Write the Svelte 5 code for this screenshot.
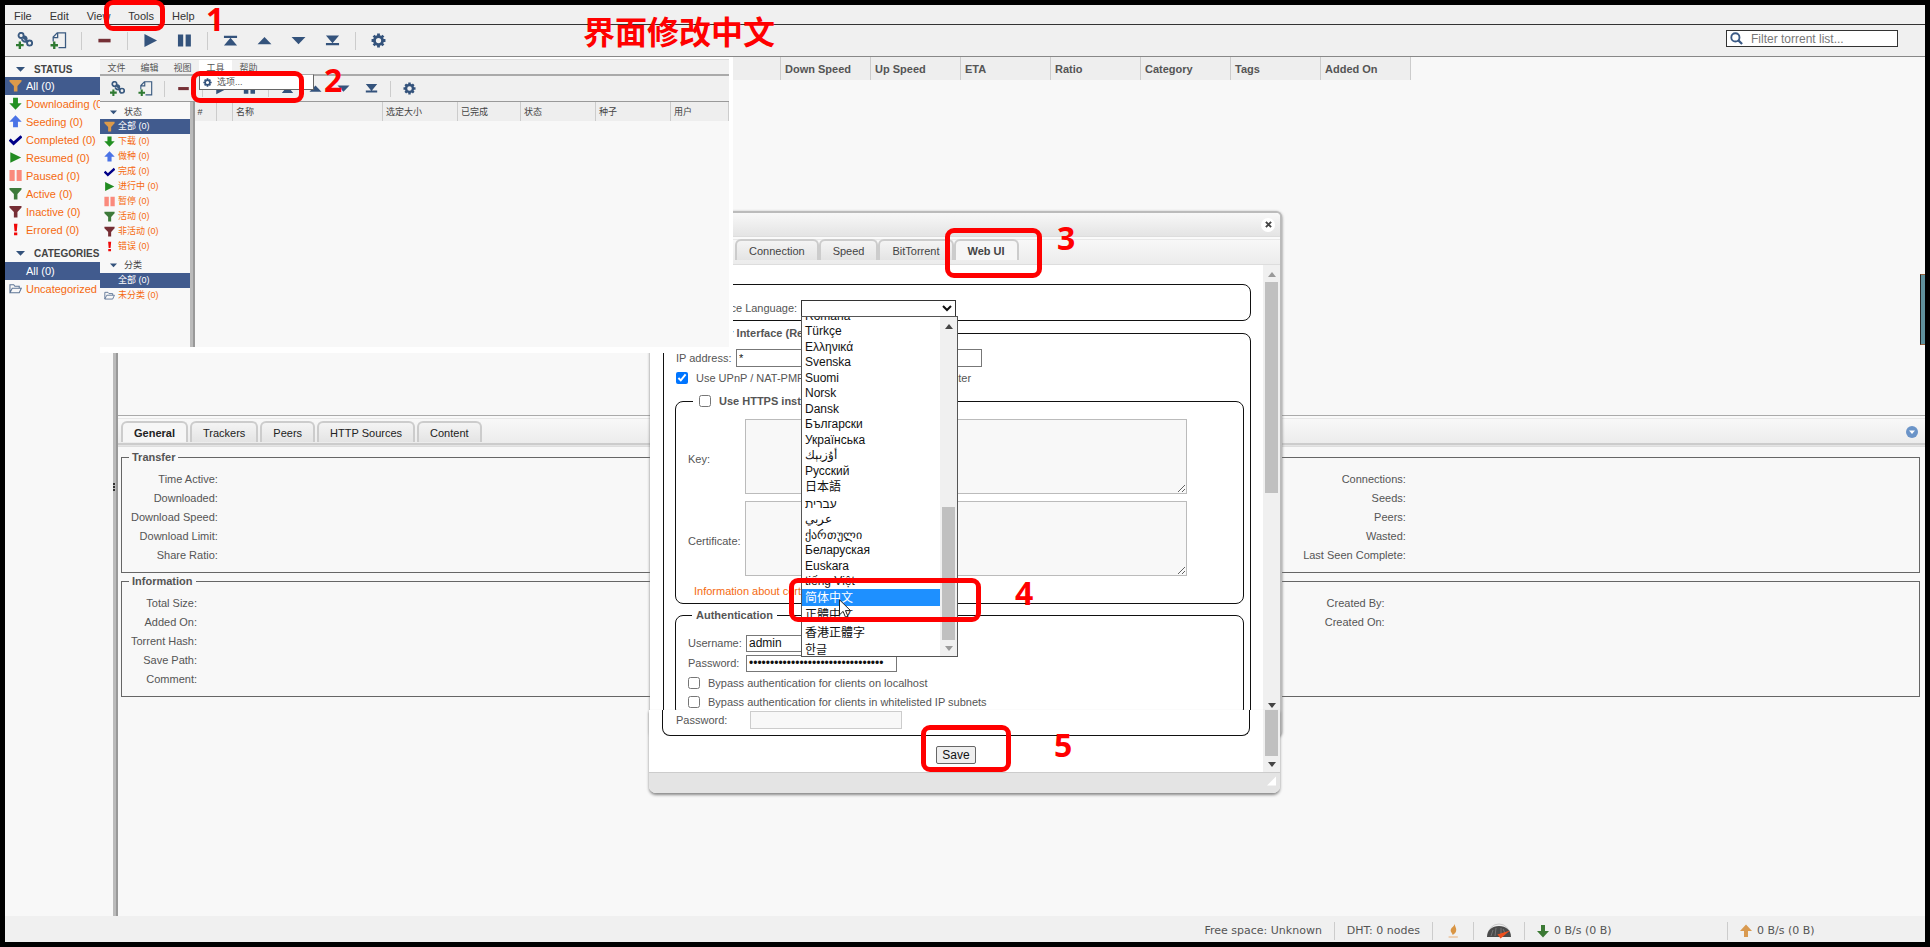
<script>
  const menus = ['File', 'Edit', 'View', 'Tools', 'Help'];
  const tools = [
    ['link', 'Add link'], ['file', 'Add file'], null,
    ['minus', 'Delete'], null,
    ['play', 'Resume'], ['pause', 'Pause'], null,
    ['top', 'Top'], ['up', 'Up'], ['down', 'Down'], ['bottom', 'Bottom'], null,
    ['gear', 'Options']
  ];
  const statusIcons = ['funnel-orange', 'arrow-down', 'arrow-up', 'check', 'resume', 'paused', 'funnel-green', 'funnel-red', 'error'];
  const sideEn = {
    status: 'STATUS',
    items: ['All (0)', 'Downloading (0)', 'Seeding (0)', 'Completed (0)', 'Resumed (0)', 'Paused (0)', 'Active (0)', 'Inactive (0)', 'Errored (0)'],
    categories: 'CATEGORIES',
    all: 'All (0)',
    none: 'Uncategorized (0)'
  };
  const sideZh = {
    status: '状态',
    items: ['全部 (0)', '下载 (0)', '做种 (0)', '完成 (0)', '进行中 (0)', '暂停 (0)', '活动 (0)', '非活动 (0)', '错误 (0)'],
    categories: '分类',
    all: '全部 (0)',
    none: '未分类 (0)'
  };
  const menusZh = ['文件', '编辑', '视图', '工具', '帮助'];
  const columns = ['Down Speed', 'Up Speed', 'ETA', 'Ratio', 'Category', 'Tags', 'Added On'];
  const columnsZh = [['#', 22], ['', 16], ['名称', 150], ['选定大小', 75], ['已完成', 63], ['状态', 75], ['种子', 75], ['用户', 58]];
  const tabs = ['General', 'Trackers', 'Peers', 'HTTP Sources', 'Content'];
  const prefTabs = ['Connection', 'Speed', 'BitTorrent', 'Web UI'];
  const transfer = [
    ['Time Active:', 'Connections:'],
    ['Downloaded:', 'Seeds:'],
    ['Download Speed:', 'Peers:'],
    ['Download Limit:', 'Wasted:'],
    ['Share Ratio:', 'Last Seen Complete:']
  ];
  const information = [
    ['Total Size:', 'Created By:'],
    ['Added On:', 'Created On:'],
    ['Torrent Hash:', ''],
    ['Save Path:', ''],
    ['Comment:', '']
  ];
  const languages = [
    'Română', 'Türkçe', 'Ελληνικά', 'Svenska', 'Suomi', 'Norsk', 'Dansk', 'Български', 'Українська',
    'أۇزبېك', 'Русский', '日本語', 'עברית', 'عربي', 'ქართული', 'Беларуская', 'Euskara', 'tiếng Việt',
    '简体中文', '正體中文', '香港正體字', '한글'
  ];
  const tall = ['日本語', '简体中文', '正體中文', '香港正體字', '한글'];
</script>

{#snippet icon(name)}
  <svg class="icon {name}" viewBox="0 0 16 16" aria-hidden="true">
    {#if name === 'link'}
      <g fill="none" stroke="#3a5a80" stroke-width="1.8">
        <circle cx="4.8" cy="3.2" r="2.4" />
        <circle cx="12.8" cy="10.4" r="2.4" />
        <path d="M7 4.4c2.4-.6 3.6 1.4 2.8 3.2M5.4 6.8c1 2.4 3 2.6 4.8 2.2M6.6 5l4.6 4" />
      </g>
      <path d="M3.6 9v7M0 12.4h7.2" stroke="#2f7a32" stroke-width="2.2" />
    {:else if name === 'file'}
      <path d="M3 9V4.8L6.8.8h7.8v14H8M3 5.2h4.2V1" fill="none" stroke="#3a5a80" stroke-width="1.2" />
      <path d="M4 9v7M.5 12.5h7" stroke="#2f7a32" stroke-width="2.2" />
    {:else if name === 'minus'}
      <path d="M1.5 6.2h13v3.8h-13z" fill="#752f35" />
    {:else if name === 'play'}
      <path d="M1.5 1 15 8 1.5 15z" fill="#34537c" />
    {:else if name === 'pause'}
      <path d="M1 1.5h5.6v13H1zM9.2 1.5h5.6v13H9.2z" fill="#34537c" />
    {:else if name === 'top'}
      <path d="M1 2.8h14v2.4H1zM8 5l7 8.4H1z" fill="#34537c" />
    {:else if name === 'up'}
      <path d="M8 4.2 15.4 12H.6z" fill="#34537c" />
    {:else if name === 'down'}
      <path d="M8 12 .6 4.2h14.8z" fill="#34537c" />
    {:else if name === 'bottom'}
      <path d="M1 2.6h14l-7 8.4zM1 10.6h14V13H1z" fill="#34537c" />
    {:else if name === 'gear'}
      <circle cx="8" cy="8" r="4.3" fill="none" stroke="#34537c" stroke-width="3" />
      <path d="M8 .6v3M8 12.4v3M.6 8h3M12.4 8h3M2.8 2.8l2 2M11.2 11.2l2 2M2.8 13.2l2-2M11.2 4.8l2-2" stroke="#34537c" stroke-width="3" />
    {:else if name.startsWith('funnel')}
      <path d="M.6 1.2h14.8v2L10.4 8.6V15.4H6V8.6L.6 3.2z"
        fill={name === 'funnel-orange' ? '#dc9a4a' : name === 'funnel-green' ? '#3d7a3a' : '#762e35'} />
    {:else if name === 'arrow-down'}
      <path d="M5 .8h6v7h4.6L8 15.6.4 7.8H5z" fill="#229022" />
    {:else if name === 'arrow-up'}
      <path d="M5 15.2h6v-7h4.6L8 .4.4 8.2H5z" fill="#4a73e6" />
    {:else if name === 'check'}
      <path d="M.8 8.2 5.6 12.8 15.4 4" fill="none" stroke="#000088" stroke-width="3.6" />
    {:else if name === 'resume'}
      <path d="M1.6 1.4 15 8 1.6 14.6z" fill="#228b22" />
    {:else if name === 'paused'}
      <path d="M.6 1.2H7v13.6H.6zM9.4 1.2h6.2v13.6H9.4z" fill="#fa8a7c" />
    {:else if name === 'error'}
      <path d="M6 1h4.4l-.8 9H6.8zM6.2 11.6h4V15h-4z" fill="#f00808" />
    {:else if name === 'folder'}
      <path d="M1.2 13.2V3.4h4.6l1.4 1.8h5.4v2.4M1.2 13.2 4 7.6h11.2l-2.6 5.6z" fill="none" stroke="#5d7595" stroke-width="1.3" />
    {:else if name === 'caret'}
      <path d="M0 3.4h16L8 12z" fill="#34537c" />
    {/if}
  </svg>
{/snippet}

{#snippet toolbar()}
  {#each tools as tool}
    {#if tool}
      <button class="tool" aria-label={tool[1]}>{@render icon(tool[0])}</button>
    {:else}
      <span class="divider"></span>
    {/if}
  {/each}
{/snippet}

{#snippet filters(side)}
  <h2>{@render icon('caret')}{side.status}</h2>
  <ul>
    {#each side.items as item, i}
      <li class:selected={i === 0}><a href="#status">{@render icon(statusIcons[i])}{item}</a></li>
    {/each}
  </ul>
  <h2 class="second">{@render icon('caret')}{side.categories}</h2>
  <ul>
    <li class="selected"><a href="#category">{@render icon('blank')}{side.all}</a></li>
    <li><a href="#category">{@render icon('folder')}{side.none}</a></li>
  </ul>
{/snippet}

{#snippet details(title, rows)}
  <fieldset class="details">
    <legend>{title}</legend>
    <div class="grid">
      {#each rows as row}
        <span>{row[0]}</span><i></i><i></i><i></i><span>{row[1]}</span><i></i>
      {/each}
    </div>
  </fieldset>
{/snippet}

{#snippet arrow(dir, tone)}
  <svg class="arrow" viewBox="0 0 8 5" aria-hidden="true">
    <path d={dir === 'up' ? 'M4 0 8 5H0z' : 'M4 5 0 0h8z'} fill={tone} />
  </svg>
{/snippet}

<div class="frame">
  <nav class="menubar">
    {#each menus as m}<button>{m}</button>{/each}
  </nav>
  <div class="toolbar">
    {@render toolbar()}
    <label class="search">
      <svg viewBox="0 0 14 14" aria-hidden="true">
        <circle cx="5.8" cy="5.8" r="4.4" fill="none" stroke="#3b5a85" stroke-width="2" />
        <path d="m9 9 4 4" stroke="#3b5a85" stroke-width="2.4" />
      </svg>
      <input type="text" placeholder="Filter torrent list..." aria-label="Filter torrent list" />
    </label>
  </div>

  <main class="work">
    <aside class="side">{@render filters(sideEn)}</aside>
    <div class="splitter">
      <svg class="handle" viewBox="0 0 3 8" aria-hidden="true"><path d="M0 0h2v2H0zM0 3h2v2H0zM0 6h2v2H0z" fill="#333" /></svg>
    </div>
    <section class="content">
      <div class="list">
        <table>
          <thead>
            <tr>
              <th class="lead"></th>
              {#each columns as c}<th>{c}</th>{/each}
            </tr>
          </thead>
        </table>
      </div>
      <div class="tabbar">
        {#each tabs as t, i}<button class="tab" class:active={i === 0}>{t}</button>{/each}
        <button class="collapse" aria-label="Collapse">
          <svg viewBox="0 0 12 12"><circle cx="6" cy="6" r="6" fill="#6b94c8" /><path d="M3 4.4h6L6 8z" fill="#fff" /></svg>
        </button>
      </div>
      <div class="panels">
        {@render details('Transfer', transfer)}
        {@render details('Information', information)}
      </div>
    </section>
  </main>

  <footer class="statusbar">
    <span class="cell">Free space: Unknown</span>
    <span class="cell">DHT: 0 nodes</span>
    <span class="cell">
      <svg class="flame" viewBox="0 0 16 16" aria-hidden="true">
        <path d="M9.6 1C10 4 12 5.4 11 8.4 10.4 10.4 8.4 11.4 7.6 12 7.8 10 5 9 5.8 6.4 6.4 4.4 9 3.6 9.6 1z" fill="#d99544" />
        <path d="M3.6 13.4h9.2v1.2H3.6z" fill="#e9b98a" />
      </svg>
    </span>
    <span class="cell">
      <svg class="gauge" viewBox="0 0 26 16" aria-hidden="true">
        <path d="M2 12a11 11 0 0 1 22 0" fill="none" stroke="#ccc" stroke-width="1" />
        <path d="M1 14C1 7 6 3 13 3s12 4 12 11z" fill="#4b4b4b" />
        <path d="M5 13l2-6M9 13l1-8M15 11V5M19 10l-2-4" stroke="#777" stroke-width="1" />
        <path d="M11.4 11.4 24 7.4 14.6 15.4z" fill="#f0501e" />
      </svg>
    </span>
    <span class="cell rx">
      <svg class="rate" viewBox="0 0 12 14" aria-hidden="true"><path d="M4 1h4v6h4l-6 6.6L0 7h4z" fill="#3c7a35" /></svg>
      0 B/s (0 B)
    </span>
    <span class="cell tx">
      <svg class="rate" viewBox="0 0 12 14" aria-hidden="true"><path d="M4 13h4V7h4L6 .4 0 7h4z" fill="#d99a50" /></svg>
      0 B/s (0 B)
    </span>
  </footer>

  <div class="edge"></div>

  <section class="dialog">
    <header class="titlebar"><button aria-label="Close">
      <svg viewBox="0 0 8 8"><path d="m1 1 6 6M7 1 1 7" stroke="#444" stroke-width="2.2" /></svg>
    </button></header>
    <div class="tabbar pref">
      {#each prefTabs as t, i}<button class="tab" class:active={i === 3}>{t}</button>{/each}
    </div>
    <div class="scroll">
      <form class="form">
        <fieldset class="round lang">
          <legend>Language</legend>
          <label for="lang">User Interface Language:</label>
          <span class="picker">
            <select id="lang"><option></option></select>
            <svg viewBox="0 0 10 7" aria-hidden="true"><path d="m1 1 4 4 4-4" fill="none" stroke="#111" stroke-width="2" /></svg>
          </span>
        </fieldset>
        <fieldset class="round web">
          <legend>Web User Interface (Remote control)</legend>
          <div class="row ip">
            <label for="ip">IP address:</label>
            <input id="ip" type="text" value="*" />
          </div>
          <label class="row upnp"><input type="checkbox" checked />Use UPnP / NAT-PMP to forward the port from my router</label>
          <fieldset class="round inner">
            <legend class="with-check"><input id="https" type="checkbox" /><label for="https">Use HTTPS instead of HTTP</label></legend>
            <div class="pem"><label for="key">Key:</label><textarea id="key"></textarea></div>
            <div class="pem"><label for="cert">Certificate:</label><textarea id="cert"></textarea></div>
            <a class="info" href="#cert">Information about certificates</a>
          </fieldset>
          <fieldset class="round inner auth">
            <legend>Authentication</legend>
            <div class="cred"><label for="user">Username:</label><input id="user" type="text" value="admin" /></div>
            <div class="cred"><label for="pass">Password:</label><input id="pass" type="password" value="01234567890123456789012345678901" /></div>
            <label class="bypass"><input type="checkbox" />Bypass authentication for clients on localhost</label>
            <label class="bypass"><input type="checkbox" />Bypass authentication for clients in whitelisted IP subnets</label>
          </fieldset>
        </fieldset>
      </form>
      <div class="bar">
        {@render arrow('up', '#999')}
        <div class="thumb"></div>
        {@render arrow('down', '#444')}
      </div>
    </div>
  </section>

  <section class="dialog-end">
    <div class="end-body">
      <div class="end-form">
        <div class="end-box">
          <label for="dyn">Password:</label>
          <input id="dyn" type="password" disabled />
        </div>
        <button class="save">Save</button>
      </div>
      <div class="bar">
        <div class="thumb"></div>
        {@render arrow('down', '#444')}
      </div>
    </div>
    <div class="grip"><svg viewBox="0 0 10 10" aria-hidden="true"><path d="M10 0v10H0z" fill="#fff" /></svg></div>
  </section>

  <div class="options">
    <ul role="listbox" aria-label="Language">
      {#each languages as l}
        <li role="option" aria-selected={l === '简体中文'} class:tall={tall.includes(l)}>{l}</li>
      {/each}
    </ul>
    <div class="bar">
      {@render arrow('up', '#444')}
      <div class="thumb"></div>
      {@render arrow('down', '#999')}
    </div>
  </div>

  <section class="mini">
    <div class="mini-window">
      <nav class="mini-menu">
        {#each menusZh as m, i}<button class:open={i === 3}>{m}</button>{/each}
      </nav>
      <div class="mini-toolbar">{@render toolbar()}</div>
      <div class="mini-work">
        <aside class="mini-side">{@render filters(sideZh)}</aside>
        <div class="splitter"></div>
        <div class="mini-list">
          <table>
            <thead>
              <tr>{#each columnsZh as [name, width]}<th style:width="{width}px">{name}</th>{/each}</tr>
            </thead>
          </table>
        </div>
      </div>
      <button class="mini-drop">{@render icon('gear')}选项...</button>
    </div>
  </section>

  <svg class="pointer" viewBox="0 0 12 19" aria-hidden="true">
    <path d="M.5.8v15l3.6-3.4 2.4 5.8 2.4-1-2.4-5.6h5z" fill="#fff" stroke="#222" />
  </svg>

  <strong class="note title">界面修改中文</strong>
  <div class="ring r1"></div><strong class="note n1">1</strong>
  <div class="ring r2"></div><strong class="note n2">2</strong>
  <div class="ring r3"></div><strong class="note n3">3</strong>
  <div class="ring r4"></div><strong class="note n4">4</strong>
  <div class="ring r5"></div><strong class="note n5">5</strong>
</div>

<style>
  :global(body) { background: #000; }
  * { box-sizing: border-box; }
  .frame {
    position: relative;
    display: flex;
    flex-direction: column;
    min-height: 100vh;
    border: 5px solid #000;
    background: #f8f8f8;
    color: #555;
    font: 11px/14px "Liberation Sans", "Noto Sans CJK SC", Arial, sans-serif;
  }
  button, input, select, textarea { font: inherit; color: inherit; margin: 0; }
  button { border: 0; background: none; padding: 0; }
  ul, h2 { margin: 0; padding: 0; list-style: none; }
  fieldset { margin: 0; min-width: 0; }
  a { color: #f56a10; text-decoration: none; }
  .icon { width: 14px; height: 14px; flex: none; display: block; }

  .menubar {
    display: flex;
    gap: 18px;
    height: 20px;
    padding: 3px 9px 0;
    background: #f0f0f0;
    border-bottom: 1px solid #333;
    color: #333;
  }
  .menubar button { height: 16px; }
  .toolbar {
    display: flex;
    align-items: center;
    height: 32px;
    padding: 0 27px 0 2px;
    background: #f0f0f0;
    border-bottom: 1px solid #888;
  }
  .tool { width: 34px; display: grid; place-items: center; }
  .toolbar .icon { width: 15px; height: 15px; }
  .toolbar .link, .toolbar .file { width: 17px; height: 17px; }
  .divider { width: 12px; height: 18px; display: grid; justify-content: center; }
  .divider::before { content: ""; width: 1px; background: #ccc; }
  .search {
    display: flex;
    align-items: center;
    width: 172px;
    height: 17px;
    margin: 0 0 4px auto;
    padding-left: 3px;
    border: 1px solid #333;
    background: #fff;
  }
  .search svg { width: 13px; height: 13px; flex: none; }
  .search input { border: 0; outline: 0; padding: 0 8px; width: 100%; font-size: 12px; background: none; }
  .search input::placeholder { color: #777; }

  .work { flex: 1; display: flex; }
  .side { width: 108px; overflow: hidden; white-space: nowrap; }
  h2 {
    display: flex;
    align-items: center;
    gap: 9px;
    height: 20px;
    padding: 5px 0 0 11px;
    font-size: 10px;
    line-height: 16px;
    color: #444;
  }
  h2 .icon { width: 9px; height: 9px; }
  h2.second { height: 23px; padding-top: 6px; }
  li a { display: flex; align-items: center; gap: 4px; height: 18px; padding: 0 0 1px 4px; }
  li a .icon { width: 13px; height: 13px; }
  li.selected { background: #415b8e; }
  li.selected a { color: #fff; }
  .splitter {
    display: flex;
    align-items: center;
    width: 5px;
    background: linear-gradient(90deg, #bbb 3px, #999 3px);
  }
  .handle { width: 3px; height: 8px; }
  .content { flex: 1; min-width: 0; display: flex; flex-direction: column; }
  .list { height: 358px; }
  table { border-collapse: collapse; table-layout: fixed; }
  .list table { width: 1293px; }
  th {
    width: 90px;
    height: 23px;
    padding: 0 4px;
    border-right: 1px solid #ccc;
    background: #eee;
    text-align: left;
    white-space: nowrap;
    font-weight: bold;
  }
  th.lead { width: auto; }

  .tabbar {
    display: flex;
    align-items: flex-end;
    gap: 2px;
    height: 32px;
    padding: 0 7px 3px 3px;
    border-top: 1px solid #aaa;
    border-bottom: 1px solid #ddd;
    background: linear-gradient(#fafafa 0 2px, #e8e8e8 2px 3px, #f8f8f8 3px, #ececec 27px, #ccc 27px 29px, #e4e4e4 29px);
  }
  .tab {
    height: 21px;
    margin-bottom: 1px;
    padding: 1px 11px 0;
    border: 2px solid #ccc;
    border-bottom: 0;
    border-radius: 6px 6px 0 0;
    background: linear-gradient(#f4f4f4, #e4e4e4);
    color: #222;
  }
  .tab.active { font-weight: bold; background: #f6f6f6; }
  .collapse { margin: 0 0 5px auto; }
  .collapse svg { display: block; width: 12px; height: 12px; }

  .panels { padding: 3px 5px 0 3px; }
  .details {
    border: 1px solid #666;
    padding: 8px 7px 5px;
    margin-bottom: 1px;
  }
  .details legend { font-weight: bold; padding: 0 3px; line-height: 14px; }
  .grid {
    display: grid;
    grid-template-columns: auto 1fr 73px 1fr auto 1fr;
    grid-auto-rows: 19px;
    text-align: right;
    padding-left: 2px;
  }

  .statusbar {
    display: flex;
    align-items: center;
    justify-content: flex-end;
    height: 26px;
    padding-top: 4px;
    background: #f0f0f0;
    font-family: "DejaVu Sans", sans-serif;
    font-size: 11px;
  }
  .cell {
    display: flex;
    align-items: center;
    gap: 5px;
    height: 18px;
    padding: 0 12px;
    border-right: 1px solid #ccc;
    white-space: nowrap;
  }
  .cell svg { flex: none; display: block; }
  .flame { width: 16px; height: 16px; }
  .gauge { width: 26px; height: 16px; }
  .rate { width: 12px; height: 14px; }
  .rx { width: 203px; }
  .tx { width: 197px; border: 0; }
  .edge {
    position: absolute;
    right: 0;
    top: 269px;
    width: 5px;
    height: 71px;
    background: #5f909c;
    border: 1px solid #96623c;
    border-left-color: #222;
    border-right: 0;
  }

  .dialog {
    position: absolute;
    left: 645px;
    top: 206px;
    width: 632px;
    height: 526px;
    border: 1px solid #bbb;
    border-width: 2px 2px 0 0;
    border-radius: 6px;
    background: #fff;
    box-shadow: 0 1px 3px #777;
    overflow: hidden;
  }
  .titlebar {
    display: flex;
    justify-content: flex-end;
    align-items: center;
    height: 23px;
    padding-right: 5px;
    background: linear-gradient(#f8f8f8, #e4e4e4);
  }
  .titlebar button { width: 14px; height: 14px; border-radius: 7px; background: #fff; display: grid; place-items: center; }
  .titlebar svg { width: 7px; height: 7px; }
  .pref { height: 29px; padding-left: 85px; gap: 0; border-top-color: #ddd; }
  .pref .tab { padding: 0 12px; color: #444; }
  .scroll { display: flex; height: 447px; overflow: hidden; }
  .form { flex: 1; padding: 12px 12px 0 13px; }
  .bar {
    display: flex;
    flex-direction: column;
    align-items: center;
    width: 17px;
    background: #f0f0f0;
  }
  .arrow { width: 8px; height: 5px; display: block; }
  .bar .thumb { width: 13px; background: #c0c0c0; }
  .scroll .bar { padding: 7px 0 4px; }
  .scroll .thumb { height: 211px; margin: 5px 0 auto; }

  .round { border: 1px solid #111; border-radius: 8px; }
  .round legend { font-weight: bold; padding: 0 4px; line-height: 14px; }
  .lang {
    display: flex;
    justify-content: flex-start;
    padding: 9px 0 3px 9px;
    margin-bottom: 5px;
  }
  .lang label { line-height: 17px; width: 123px; text-align: right; white-space: nowrap; margin-right: 5px; }
  .picker { position: relative; width: 155px; height: 17px; }
  .picker select { appearance: none; display: block; width: 100%; height: 100%; border: 1px solid #333; border-radius: 0; background: #fff; }
  .picker svg { position: absolute; right: 4px; top: 5px; width: 10px; height: 7px; }
  .web { padding: 9px 6px 0 11px; }
  .web > legend { margin-left: 4px; }
  .row { display: flex; align-items: center; white-space: nowrap; }
  .ip { padding-left: 1px; }
  .ip label { width: 60px; }
  input[type="text"], input[type="password"] { color: #111; }
  .ip input { width: 246px; height: 18px; border: 1px solid #777; padding: 0 2px; }
  input[type="checkbox"] { width: 12px; height: 12px; flex: none; }
  .upnp { gap: 8px; height: 27px; padding: 0 0 5px 1px; }
  .inner { padding: 11px 56px 5px 12px; margin-bottom: 4px; }
  .inner legend { margin-left: 4px; }
  .with-check { display: flex; align-items: center; gap: 8px; height: 14px; }
  .inner legend.with-check { margin-left: 5px; padding: 0 6px; }
  .pem { display: flex; align-items: center; margin-bottom: 7px; }
  .pem label { width: 57px; padding-top: 4px; }
  textarea { flex: 1; height: 75px; border: 1px solid #bbb; background: #f8f8f8; }
  .info { display: block; padding: 1px 0 0 6px; line-height: 14px; }
  .cred { display: flex; align-items: center; height: 20px; }
  .cred label { width: 58px; }
  .cred input { width: 151px; height: 17px; border: 1px solid #777; padding: 0 2px; font-size: 12px; }
  .bypass { display: flex; align-items: center; gap: 8px; height: 19px; white-space: nowrap; }

  .dialog-end {
    position: absolute;
    left: 644px;
    top: 705px;
    width: 631px;
    border-radius: 0 0 7px 7px;
    background: #fff;
    box-shadow: 0 2px 3px #888;
  }
  .end-body { display: flex; height: 62px; }
  .end-form { flex: 1; padding: 0 13px; display: flex; flex-direction: column; align-items: center; gap: 10px; }
  .end-box {
    display: flex;
    width: 100%;
    height: 26px;
    padding: 1px 0 0 13px;
    border: 1px solid #111;
    border-top: 0;
    border-radius: 0 0 8px 8px;
  }
  .end-box label { width: 74px; line-height: 18px; }
  .end-box input { width: 152px; height: 18px; border: 1px solid #ccc; background: #f8f8f8; }
  .save { width: 40px; height: 18px; border: 1px solid #666; border-radius: 2px; background: #efefef; color: #111; font-size: 12px; }
  .end-body .thumb { height: 46px; }
  .end-body .arrow { margin-top: 6px; }
  .grip { display: flex; justify-content: flex-end; height: 21px; padding: 3px 4px; background: #e4e4e4; border-top: 1px solid #ccc; border-radius: 0 0 7px 7px; }
  .grip svg { width: 9px; height: 10px; }

  .options {
    position: absolute;
    left: 796px;
    top: 311px;
    width: 157px;
    height: 341px;
    display: flex;
    border: 1px solid #555;
    background: #fff;
    overflow: hidden;
  }
  .options ul { flex: 1; display: flex; flex-direction: column; margin: -9px 0 -3px; color: #111; font-size: 12px; }
  .options li { flex: 15 1 0; display: flex; align-items: center; min-height: 0; padding-left: 3px; line-height: 14px; }
  .options li.tall { flex-grow: 17; }
  .options li[aria-selected="true"] { background: #1e90ff; color: #fff; }
  .options .bar { padding: 7px 0 5px; }
  .options .thumb { height: 133px; margin: auto 0 6px; }

  .mini {
    position: absolute;
    left: 95px;
    top: 52px;
    padding: 2px 4px 6px 0;
    background: #fff;
    font-size: 9px;
    line-height: 12px;
    font-family: "Liberation Sans", "Noto Sans CJK SC", sans-serif;
  }
  .mini-window { position: relative; width: 629px; background: #f8f8f8; }
  .mini-menu { display: flex; height: 17px; background: #f0f0f0; border-bottom: 2px solid #aaa; border-top: 1px solid #ddd; }
  .mini-menu button { width: 33px; height: 14px; padding-top: 1px; }
  .mini-menu .open { background: #fff; }
  .mini-toolbar { display: flex; align-items: center; height: 26px; padding-left: 3px; background: #f0f0f0; border-bottom: 1px solid #999; }
  .mini-toolbar .tool { width: 28px; }
  .mini-toolbar .divider { width: 10px; height: 16px; }
  .mini-toolbar .icon { width: 13px; height: 13px; }
  .mini-toolbar .link, .mini-toolbar .file { width: 15px; height: 15px; }
  .mini-work { display: flex; height: 245px; }
  .mini-side { width: 90px; white-space: nowrap; }
  .mini-side h2 { height: 17px; padding: 3px 0 0 10px; gap: 7px; font-size: 9px; line-height: 12px; font-weight: normal; }
  .mini-side h2 .icon { width: 7px; height: 7px; }
  .mini-side h2.second { height: 19px; padding-top: 3px; }
  .mini-side li a { height: 15px; gap: 3px; }
  .mini-side li a .icon { width: 11px; height: 11px; }
  .mini-list table { width: 534px; }
  .mini-list th { height: 19px; padding: 0 3px; font-size: 9px; font-weight: normal; color: #444; }
  .mini-drop {
    position: absolute;
    left: 99px;
    top: 15px;
    width: 115px;
    height: 16px;
    display: flex;
    align-items: center;
    gap: 5px;
    padding-left: 3px;
    background: #fff;
    border: 1px solid #666;
    border-top-color: #aaa;
  }
  .mini-drop .icon { width: 9px; height: 9px; }

  .pointer { position: absolute; left: 834px; top: 594px; width: 12px; height: 19px; }
  .note { position: absolute; color: #f00; font: bold 32px/32px "Noto Sans", "Open Sans", sans-serif; }
  .note.title { left: 578px; top: 9px; font-family: "Noto Sans CJK SC", sans-serif; white-space: nowrap; }
  .n1 { left: 201px; top: -2px; }
  .n2 { left: 319px; top: 59px; }
  .n3 { left: 1052px; top: 217px; }
  .n4 { left: 1010px; top: 572px; }
  .n5 { left: 1049px; top: 724px; }
  .ring { position: absolute; border: 5px solid #f00; border-radius: 9px; }
  .r1 { left: 99px; top: -5px; width: 61px; height: 31px; }
  .r2 { left: 186px; top: 66px; width: 113px; height: 32px; }
  .r3 { left: 940px; top: 223px; width: 97px; height: 50px; }
  .r4 { left: 784px; top: 573px; width: 192px; height: 44px; }
  .r5 { left: 916px; top: 720px; width: 90px; height: 47px; }
</style>
